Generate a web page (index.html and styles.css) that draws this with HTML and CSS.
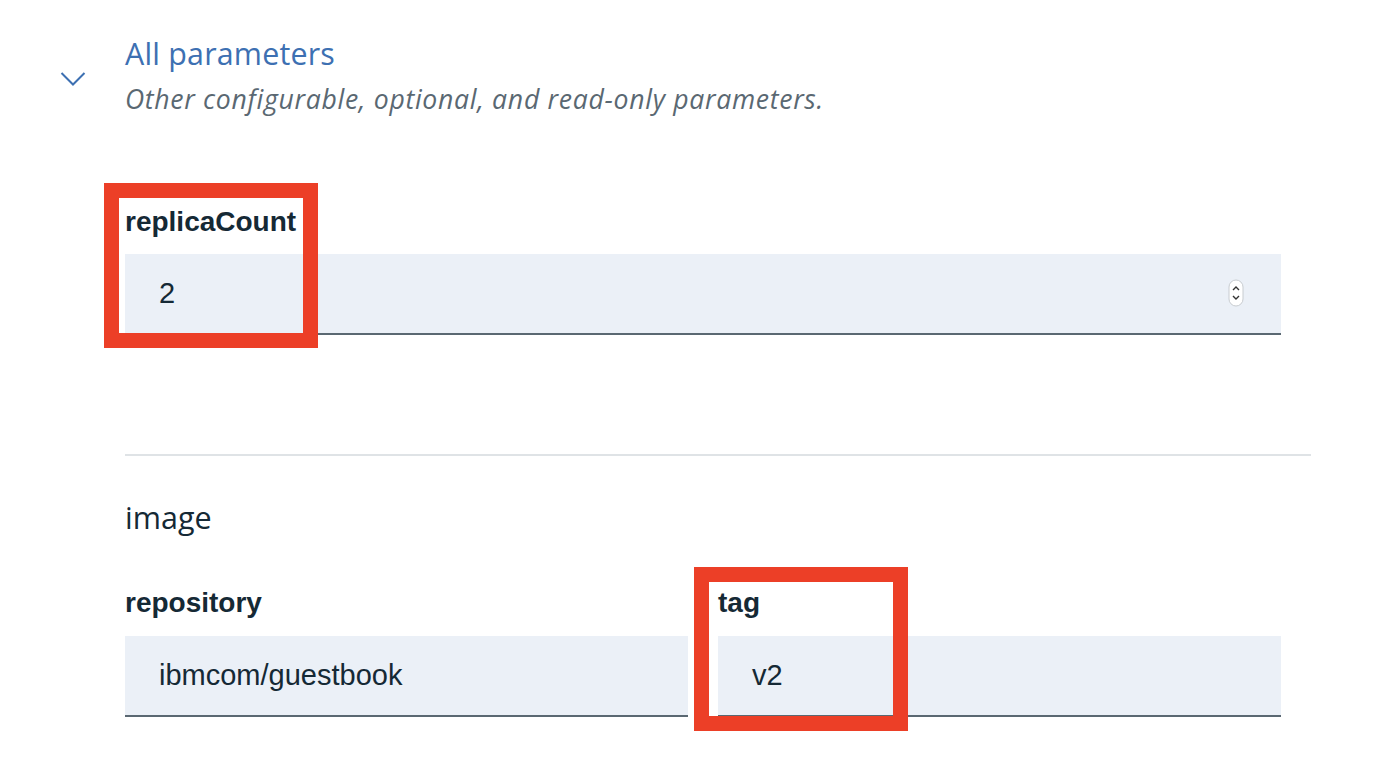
FILE: index.html
```html
<!DOCTYPE html>
<html>
<head>
<meta charset="utf-8">
<link rel="stylesheet" href="styles.css">
</head>
<body>
<div class="page">
  <div class="section-head">
    <div class="chev-col">
      <svg class="chev" width="26" height="16" viewBox="0 0 26 16"><path d="M1.5 2 L13 13.5 L24.5 2" fill="none" stroke="#3d70b2" stroke-width="2"/></svg>
    </div>
    <div class="head-text">
      <div class="title">All parameters</div>
      <div class="subtitle">Other configurable, optional, and read-only parameters.</div>
    </div>
  </div>

  <div class="content">
    <div class="field field-full">
      <div class="label">replicaCount</div>
      <div class="input">
        <span class="value">2</span>
        <svg class="spinner" width="16" height="28" viewBox="0 0 16 28"><rect x="1" y="1" width="14" height="26" rx="7" fill="#fff" stroke="#c8ccd0"/><path d="M5 11 L8 8 L11 11" fill="none" stroke="#333" stroke-width="1.4"/><path d="M5 17 L8 20 L11 17" fill="none" stroke="#333" stroke-width="1.4"/></svg>
      </div>
      <div class="highlight hl-1"></div>
    </div>

    <div class="divider"></div>

    <div class="group-title">image</div>

    <div class="row">
      <div class="field">
        <div class="label">repository</div>
        <div class="input"><span class="value">ibmcom/guestbook</span></div>
      </div>
      <div class="field">
        <div class="label">tag</div>
        <div class="input"><span class="value">v2</span></div>
        <div class="highlight hl-2"></div>
      </div>
    </div>
  </div>
</div>
</body>
</html>
```

FILE: styles.css
```css
html, body {
  margin: 0;
  padding: 0;
  background: #ffffff;
}
.page {
  width: 1376px;
  height: 768px;
  overflow: hidden;
  font-family: "Open Sans", "Noto Sans", sans-serif;
  color: #152935;
}
.section-head {
  display: flex;
  padding-top: 34px;
}
.chev-col {
  width: 125px;
  flex: none;
  padding-left: 60px;
  padding-top: 37px;
  box-sizing: border-box;
}
.chev {
  display: block;
}
.title {
  font-size: 30.4px;
  line-height: 40px;
  color: #3d70b2;
  letter-spacing: 0.2px;
}
.subtitle {
  font-size: 26.6px;
  line-height: 34px;
  font-style: italic;
  color: #5a6872;
  margin-top: 7.5px;
  letter-spacing: 0.7px;
}
.content {
  padding-left: 125px;
  width: 1311px;
  box-sizing: border-box;
}
.field {
  position: relative;
  flex: 1;
}
.field-full {
  margin-top: 89.6px;
  width: 1156px;
}
.label {
  font-family: "Liberation Sans", Arial, sans-serif;
  font-weight: bold;
  font-size: 28px;
  line-height: 34px;
  color: #152935;
}
.field-full .label {
  margin-bottom: 14.7px;
}
.input {
  height: 79px;
  background: #ebf0f7;
  border-bottom: 2px solid #5a6872;
  display: flex;
  align-items: center;
  justify-content: space-between;
  padding: 0 37px 0 34px;
  box-sizing: content-box;
}
.value {
  font-family: "Liberation Sans", Arial, sans-serif;
  font-size: 29px;
  color: #152935;
}
.spinner {
  display: block;
}
.divider {
  margin-top: 119px;
  height: 2px;
  background: #dfe3e6;
  width: 1186px;
}
.group-title {
  margin-top: 41px;
  font-size: 30.5px;
  line-height: 40px;
  color: #152935;
}
.row {
  display: flex;
  gap: 30px;
  width: 1156px;
  margin-top: 49.3px;
}
.row .label {
  margin-bottom: 15.7px;
}
.highlight {
  position: absolute;
  border: 15px solid #ec3f27;
  box-sizing: border-box;
  pointer-events: none;
}
.hl-1 {
  left: -21px;
  top: -22px;
  width: 214px;
  height: 165px;
}
.hl-2 {
  left: -24px;
  top: -19px;
  width: 214px;
  height: 164px;
}
```
